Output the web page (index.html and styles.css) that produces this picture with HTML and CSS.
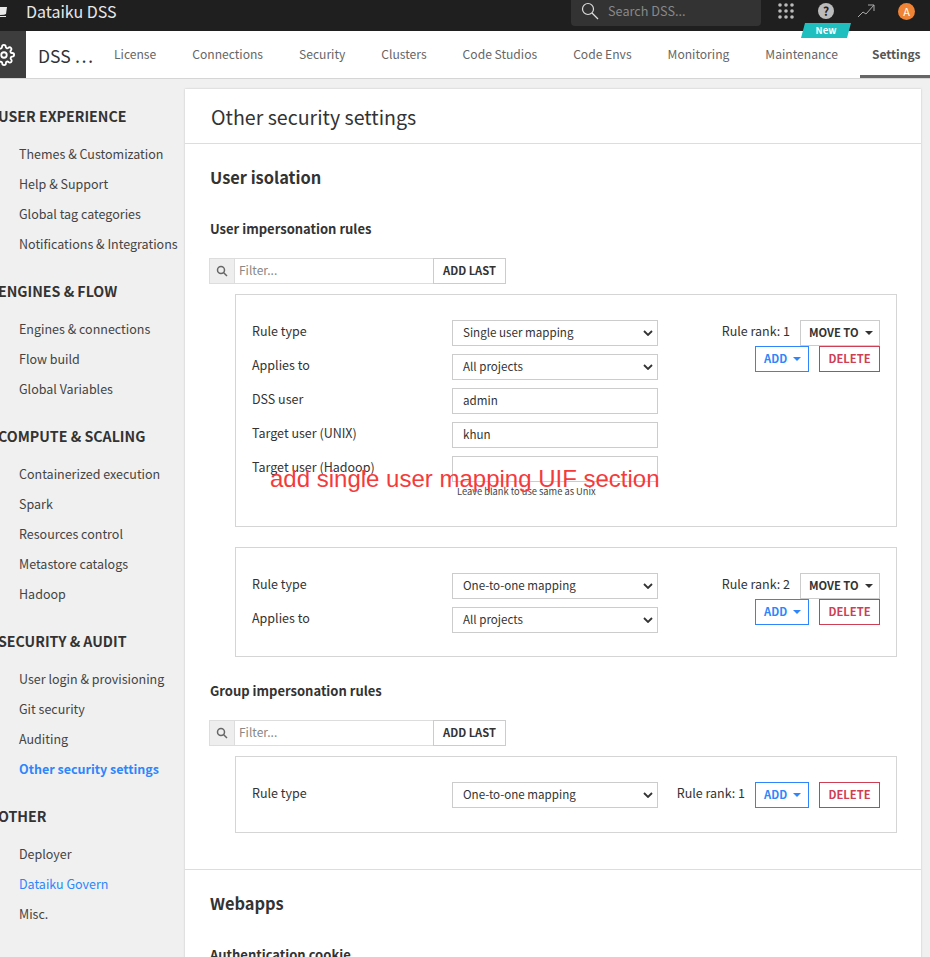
FILE: index.html
```html
<!DOCTYPE html>
<html lang="en">
<head>
    <meta charset="UTF-8">
    <title>Other security settings</title>
    <link rel="stylesheet" href="styles.css">
</head>
<body>
<div class="page">
    <header class="topbar">
        <svg class="logo" width="18" height="31" viewBox="0 0 18 31"><path d="M3 7 L13 7 L12 14 Q11 15 3 15 Z M3 16 H12 V17 H3 Z" fill="#e8e8e8"/></svg>
        <span class="brand">Dataiku DSS</span>
        <div class="search">
            <svg width="18" height="18" viewBox="0 0 18 18" fill="none" stroke="#ddd" stroke-width="1.2"><circle cx="7" cy="7" r="5.5"/><path d="M11 11 L17 17"/></svg>
            <span>Search DSS...</span>
        </div>
        <svg class="grid-icon" width="16" height="16" viewBox="0 0 16 16" fill="#bbb">
            <circle cx="2" cy="2" r="1.8"/><circle cx="8" cy="2" r="1.8"/><circle cx="14" cy="2" r="1.8"/>
            <circle cx="2" cy="8" r="1.8"/><circle cx="8" cy="8" r="1.8"/><circle cx="14" cy="8" r="1.8"/>
            <circle cx="2" cy="14" r="1.8"/><circle cx="8" cy="14" r="1.8"/><circle cx="14" cy="14" r="1.8"/>
        </svg>
        <span class="help-icon">?</span>
        <svg class="trend-icon" width="18" height="14" viewBox="0 0 18 14" fill="none" stroke="#aaa" stroke-width="1"><path d="M1 13 L6 8 L9 10 L17 1 M11 1 H17 V7"/></svg>
        <span class="avatar">A</span>
        <span class="new-badge">New</span>
    </header>

    <nav class="tabs">
        <div class="gear-box">
            <svg width="22" height="22" viewBox="0 0 24 24" fill="none" stroke="#fff" stroke-width="2" stroke-linejoin="round"><circle cx="12" cy="12" r="3"/><path d="M19.4 15a1.65 1.65 0 0 0 .33 1.82l.06.06a2 2 0 1 1-2.83 2.83l-.06-.06a1.65 1.65 0 0 0-2.82 1.17V21a2 2 0 1 1-4 0v-.09a1.65 1.65 0 0 0-2.82-1.12l-.06.06a2 2 0 1 1-2.83-2.83l.06-.06a1.65 1.65 0 0 0-1.17-2.82H3a2 2 0 1 1 0-4h.09a1.65 1.65 0 0 0 1.12-2.82l-.06-.06a2 2 0 1 1 2.83-2.83l.06.06a1.65 1.65 0 0 0 2.82-1.17V3a2 2 0 1 1 4 0v.09a1.65 1.65 0 0 0 2.82 1.12l.06-.06a2 2 0 1 1 2.83 2.83l-.06.06a1.65 1.65 0 0 0 1.17 2.82H21a2 2 0 1 1 0 4h-.09a1.65 1.65 0 0 0-1.51 1z"/></svg>
        </div>
        <span class="tabs-title">DSS …</span>
        <a class="tab">License</a>
        <a class="tab">Connections</a>
        <a class="tab">Security</a>
        <a class="tab">Clusters</a>
        <a class="tab">Code Studios</a>
        <a class="tab">Code Envs</a>
        <a class="tab">Monitoring</a>
        <a class="tab">Maintenance</a>
        <a class="tab active">Settings</a>
    </nav>

    <div class="main">
        <aside class="sidebar">
            <h4>USER EXPERIENCE</h4>
            <a>Themes &amp; Customization</a>
            <a>Help &amp; Support</a>
            <a>Global tag categories</a>
            <a>Notifications &amp; Integrations</a>
            <h4>ENGINES &amp; FLOW</h4>
            <a>Engines &amp; connections</a>
            <a>Flow build</a>
            <a>Global Variables</a>
            <h4>COMPUTE &amp; SCALING</h4>
            <a>Containerized execution</a>
            <a>Spark</a>
            <a>Resources control</a>
            <a>Metastore catalogs</a>
            <a>Hadoop</a>
            <h4>SECURITY &amp; AUDIT</h4>
            <a>User login &amp; provisioning</a>
            <a>Git security</a>
            <a>Auditing</a>
            <a class="current">Other security settings</a>
            <h4>OTHER</h4>
            <a>Deployer</a>
            <a class="link">Dataiku Govern</a>
            <a>Misc.</a>
        </aside>

        <section class="card">
            <h1>Other security settings</h1>

            <div class="section">
                <h2>User isolation</h2>
                <h3>User impersonation rules</h3>
                <div class="filter-bar">
                    <span class="addon"><svg width="12" height="12" viewBox="0 0 12 12" fill="none" stroke="#666" stroke-width="1.5"><circle cx="5" cy="5" r="3.5"/><path d="M7.5 7.5 L11 11"/></svg></span>
                    <span class="filter-input">Filter...</span>
                    <span class="btn add-last">ADD LAST</span>
                </div>

                <div class="rule rule-first">
                    <div class="fields">
                        <div class="row"><label>Rule type</label><span class="field select">Single user mapping<svg class="chev" width="10" height="6" viewBox="0 0 10 6" fill="none" stroke="#333" stroke-width="1.8"><path d="M1 1 L5 5 L9 1"/></svg></span></div>
                        <div class="row"><label>Applies to</label><span class="field select">All projects<svg class="chev" width="10" height="6" viewBox="0 0 10 6" fill="none" stroke="#333" stroke-width="1.8"><path d="M1 1 L5 5 L9 1"/></svg></span></div>
                        <div class="row"><label>DSS user</label><span class="field">admin</span></div>
                        <div class="row"><label>Target user (UNIX)</label><span class="field">khun</span></div>
                        <div class="row"><label>Target user (Hadoop)</label><span class="field"></span></div>
                        <p class="help">Leave blank to use same as Unix</p>
                    </div>
                    <div class="actions">
                        <div class="action-row"><span class="rank">Rule rank: 1</span><span class="btn">MOVE TO<i class="caret"></i></span></div>
                        <div class="action-row"><span class="btn btn-blue">ADD<i class="caret"></i></span><span class="btn btn-red">DELETE</span></div>
                    </div>
                    <span class="annotation">add single user mapping UIF section</span>
                </div>

                <div class="rule rule-second">
                    <div class="fields">
                        <div class="row"><label>Rule type</label><span class="field select">One-to-one mapping<svg class="chev" width="10" height="6" viewBox="0 0 10 6" fill="none" stroke="#333" stroke-width="1.8"><path d="M1 1 L5 5 L9 1"/></svg></span></div>
                        <div class="row"><label>Applies to</label><span class="field select">All projects<svg class="chev" width="10" height="6" viewBox="0 0 10 6" fill="none" stroke="#333" stroke-width="1.8"><path d="M1 1 L5 5 L9 1"/></svg></span></div>
                    </div>
                    <div class="actions">
                        <div class="action-row"><span class="rank">Rule rank: 2</span><span class="btn">MOVE TO<i class="caret"></i></span></div>
                        <div class="action-row"><span class="btn btn-blue">ADD<i class="caret"></i></span><span class="btn btn-red">DELETE</span></div>
                    </div>
                </div>

                <h3 class="group-title">Group impersonation rules</h3>
                <div class="filter-bar">
                    <span class="addon"><svg width="12" height="12" viewBox="0 0 12 12" fill="none" stroke="#666" stroke-width="1.5"><circle cx="5" cy="5" r="3.5"/><path d="M7.5 7.5 L11 11"/></svg></span>
                    <span class="filter-input">Filter...</span>
                    <span class="btn add-last">ADD LAST</span>
                </div>

                <div class="rule rule-group">
                    <div class="fields">
                        <div class="row"><label>Rule type</label><span class="field select">One-to-one mapping<svg class="chev" width="10" height="6" viewBox="0 0 10 6" fill="none" stroke="#333" stroke-width="1.8"><path d="M1 1 L5 5 L9 1"/></svg></span></div>
                    </div>
                    <div class="action-row single">
                        <span class="rank">Rule rank: 1</span><span class="btn btn-blue">ADD<i class="caret"></i></span><span class="btn btn-red">DELETE</span>
                    </div>
                </div>
            </div>

            <div class="section webapps">
                <h2>Webapps</h2>
                <h3>Authentication cookie</h3>
            </div>
        </section>
    </div>
</div>
</body>
</html>
```
FILE: styles.css
```css
html, body {
    margin: 0;
    height: 957px;
    overflow: hidden;
}
body {
    font-family: "Noto Sans CJK JP", "Noto Sans", sans-serif;
    font-size: 12.5px;
    color: #333;
    background-color: #f0f0f0;
}
.page {
    width: 951px;
    height: 957px;
    overflow: hidden;
    margin-left: -21px;
    position: relative;
}

/* top bar */
.topbar {
    height: 31px;
    background-color: #1f1f1f;
    display: flex;
    align-items: center;
    position: relative;
    color: #e8e8e8;
}
.logo {
    margin-left: 15px;
    flex: none;
}
.brand {
    margin-left: 14px;
    margin-bottom: 9px;
    font-size: 16px;
    line-height: 24px;
}
.search {
    position: absolute;
    left: 592px;
    top: 0;
    width: 190px;
    height: 26px;
    background-color: #333;
    border-radius: 0 0 4px 4px;
    display: flex;
    align-items: center;
    gap: 9px;
    padding: 0 0 4px 10px;
    box-sizing: border-box;
    color: #888;
    font-size: 12.7px;
    line-height: 20px;
}
.grid-icon {
    position: absolute;
    left: 799px;
    top: 3px;
}
.help-icon {
    position: absolute;
    left: 839px;
    top: 3px;
    width: 16px;
    height: 16px;
    border-radius: 50%;
    background-color: #bbb;
    color: #222;
    font-size: 12px;
    font-weight: 700;
    line-height: 16px;
    text-align: center;
}
.trend-icon {
    position: absolute;
    left: 878px;
    top: 4px;
}
.avatar {
    position: absolute;
    left: 919px;
    top: 3px;
    width: 17px;
    height: 17px;
    border-radius: 50%;
    background-color: #f08436;
    color: #fff;
    font-size: 11px;
    line-height: 17px;
    text-align: center;
}
.new-badge {
    position: absolute;
    left: 822px;
    top: 23px;
    width: 50px;
    height: 15px;
    background-color: #1fbfbf;
    clip-path: polygon(4px 0, 100% 0, 46px 100%, 0 100%);
    color: #fff;
    font-size: 9.5px;
    font-weight: 700;
    line-height: 15px;
    text-align: center;
    z-index: 2;
}

/* tabs */
.tabs {
    height: 47px;
    background-color: #fff;
    border-bottom: 1px solid #d5d5d5;
    display: flex;
    align-items: stretch;
    gap: 12px;
    white-space: nowrap;
    overflow: hidden;
}
.gear-box {
    width: 47px;
    flex: none;
    background-color: #3d3d3d;
    display: flex;
    align-items: center;
    justify-content: flex-end;
    padding-right: 11px;
    box-sizing: border-box;
}
.tabs-title {
    flex: none;
    font-size: 17.5px;
    line-height: 50px;
    color: #333;
    width: 54px;
    margin-right: -2px;
}
.tab {
    flex: none;
    padding: 0 12px;
    line-height: 46px;
    font-size: 12.1px;
    color: #666;
}
.tab.active {
    margin-left: -2px;
    font-size: 12px;
    font-weight: 700;
    color: #555;
    border-bottom: 3px solid #666;
    height: 44px;
}

/* main */
.main {
    display: flex;
    align-items: flex-start;
}
.sidebar {
    width: 206px;
    box-sizing: border-box;
    padding: 24px 0 0 19px;
    flex: none;
    overflow: hidden;
}
.sidebar h4 {
    margin: 19px 0 10px;
    font-size: 14.2px;
    font-weight: 700;
    line-height: 26px;
    color: #333;
}
.sidebar h4:first-child {
    margin-top: 0;
}
.sidebar a {
    display: block;
    height: 30px;
    padding-left: 21px;
    line-height: 30px;
    font-size: 12.5px;
    color: #444;
    white-space: nowrap;
}
.sidebar a.current {
    color: #2d86fb;
    font-weight: 700;
}
.sidebar a.link {
    color: #2d86fb;
}

/* card */
.card {
    width: 736px;
    margin-top: 10px;
    background-color: #fff;
    box-shadow: 0 0 2px rgba(0, 0, 0, 0.2);
}
.card h1 {
    margin: 0;
    height: 54px;
    padding-left: 26px;
    border-bottom: 1px solid #ddd;
    font-size: 19.6px;
    font-weight: 400;
    line-height: 55px;
    color: #333;
}
.section {
    padding: 19px 25px 36px;
    position: relative;
}
.section h2 {
    margin: 0;
    font-size: 16.4px;
    font-weight: 700;
    line-height: 28px;
    color: #333;
}
.section h3 {
    margin: 26px 0 17px;
    font-size: 13px;
    font-weight: 700;
    line-height: 24px;
    color: #333;
}
.section h3.group-title {
    margin-top: 22px;
    margin-bottom: 17px;
}
.webapps {
    border-top: 1px solid #ddd;
    padding-top: 19px;
}

/* filter */
.filter-bar {
    display: flex;
    height: 26px;
    margin-left: -1px;
    box-sizing: border-box;
}
.addon {
    width: 25px;
    box-sizing: border-box;
    background-color: #eee;
    border: 1px solid #ddd;
    border-right: 0;
    display: flex;
    align-items: center;
    justify-content: center;
}
.filter-input {
    width: 200px;
    box-sizing: border-box;
    border: 1px solid #ddd;
    padding-left: 4px;
    color: #888;
    font-size: 12px;
    line-height: 22px;
}

/* buttons */
.btn {
    display: inline-block;
    box-sizing: border-box;
    width: 80px;
    height: 26px;
    padding: 0 0 0 8px;
    border: 1px solid #ccc;
    background-color: #fff;
    color: #333;
    font-size: 11.2px;
    font-weight: 700;
    line-height: 23px;
    white-space: nowrap;
}
.add-last {
    width: 73px;
    margin-left: -1px;
    padding: 0;
    text-align: center;
}
.btn-blue {
    width: 54px;
    border-color: #2d86fb;
    color: #2d86fb;
}
.btn-red {
    width: 61px;
    padding: 0;
    text-align: center;
    border-color: #ce3f56;
    color: #ce3f56;
}
.caret {
    display: inline-block;
    margin-left: 6px;
    vertical-align: 2px;
    border-left: 4px solid transparent;
    border-right: 4px solid transparent;
    border-top: 4px solid currentColor;
}

/* rules */
.rule {
    margin-left: 25px;
    width: 662px;
    box-sizing: border-box;
    border: 1px solid #d5d5d5;
    padding: 25px 16px 0;
    display: flex;
    justify-content: space-between;
    position: relative;
}
.rule-first {
    margin-top: 10px;
    height: 233px;
}
.rule-second {
    margin-top: 20px;
    height: 110px;
}
.rule-group {
    margin-top: 10px;
    height: 77px;
}
.fields {
    width: 406px;
    flex: none;
}
.row {
    display: flex;
    align-items: flex-start;
    margin-bottom: 8px;
}
.row label {
    width: 200px;
    flex: none;
    font-size: 12.5px;
    line-height: 22px;
    color: #333;
}
.field {
    display: block;
    width: 206px;
    height: 26px;
    box-sizing: border-box;
    border: 1px solid #ccc;
    padding-left: 10px;
    font-size: 11.6px;
    line-height: 22px;
    color: #333;
    position: relative;
}
.select {
    background-color: #fff;
}
.chev {
    position: absolute;
    right: 4px;
    top: 9px;
}
.help {
    margin: -6px 0 0 205px;
    font-size: 9.3px;
    line-height: 14px;
    color: #444;
}
.actions {
    width: 180px;
    flex: none;
}
.action-row {
    display: flex;
    justify-content: flex-end;
    align-items: flex-start;
    gap: 10px;
}
.action-row.single {
    height: 26px;
}
.rank {
    font-size: 12.5px;
    line-height: 22px;
    color: #333;
}
.annotation {
    position: absolute;
    left: 34px;
    top: 169px;
    font-family: "Liberation Sans", Arial, sans-serif;
    font-size: 24px;
    line-height: 30px;
    color: #f43b3b;
    white-space: nowrap;
}
```
